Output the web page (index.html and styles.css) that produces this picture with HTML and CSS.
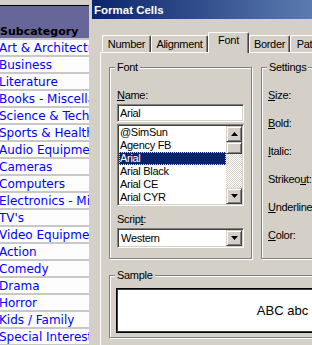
FILE: index.html
```html
<!DOCTYPE html>
<html>
<head>
<meta charset="utf-8">
<link rel="stylesheet" href="styles.css">
</head>
<body>
<div class="screen">
  <div class="subcat">
    <div class="subcat-top"></div>
    <div class="subcat-head">Subcategory</div>
    <ul class="subcat-list">
      <li>Art &amp; Architecture</li>
      <li>Business</li>
      <li>Literature</li>
      <li>Books - Miscellaneous</li>
      <li>Science &amp; Technology</li>
      <li>Sports &amp; Health</li>
      <li>Audio Equipment</li>
      <li>Cameras</li>
      <li>Computers</li>
      <li>Electronics - Misc</li>
      <li>TV's</li>
      <li>Video Equipment</li>
      <li>Action</li>
      <li>Comedy</li>
      <li>Drama</li>
      <li>Horror</li>
      <li>Kids / Family</li>
      <li>Special Interest</li>
    </ul>
  </div>
  <div class="dialog">
    <div class="titlebar">Format Cells</div>
    <div class="dialog-body">
      <div class="tabs">
        <div class="tab tab-number">Number</div>
        <div class="tab tab-align">Alignment</div>
        <div class="tab tab-font active">Font</div>
        <div class="tab tab-border">Border</div>
        <div class="tab tab-pat">Patterns</div>
      </div>
      <div class="tabpanel">
        <div class="top-groups">
          <div class="group font-group">
            <span class="legend">Font</span>
            <div class="label"><u>N</u>ame:</div>
            <div class="field">Arial</div>
            <div class="listbox">
              <div class="items">
                <div class="item">@SimSun</div>
                <div class="item">Agency FB</div>
                <div class="item sel">Arial</div>
                <div class="item">Arial Black</div>
                <div class="item">Arial CE</div>
                <div class="item">Arial CYR</div>
              </div>
              <div class="scroll">
                <div class="sbtn"><svg width="7" height="4" viewBox="0 0 7 4"><polygon points="3.5,0 7,4 0,4" fill="#000"/></svg></div>
                <div class="thumb"></div>
                <div class="track"></div>
                <div class="sbtn"><svg width="7" height="4" viewBox="0 0 7 4"><polygon points="0,0 7,0 3.5,4" fill="#000"/></svg></div>
              </div>
            </div>
            <div class="label script-label">Scrip<u>t</u>:</div>
            <div class="combo">
              <div class="combo-text">Western</div>
              <div class="sbtn"><svg width="7" height="4" viewBox="0 0 7 4"><polygon points="0,0 7,0 3.5,4" fill="#000"/></svg></div>
            </div>
          </div>
          <div class="group settings-group">
            <span class="legend">Settings</span>
            <div class="setting"><u>S</u>ize:</div>
            <div class="setting"><u>B</u>old:</div>
            <div class="setting"><u>I</u>talic:</div>
            <div class="setting">Strikeo<u>u</u>t:</div>
            <div class="setting"><u>U</u>nderline:</div>
            <div class="setting"><u>C</u>olor:</div>
          </div>
        </div>
        <div class="group sample-group">
          <span class="legend">Sample</span>
          <div class="sample">ABC abc</div>
        </div>
      </div>
    </div>
  </div>
</div>
</body>
</html>
```
FILE: styles.css
```css
html, body {
  margin: 0;
  padding: 0;
}
body {
  width: 312px;
  height: 345px;
  overflow: hidden;
  background: #d4d0c8;
}
.screen {
  display: flex;
  width: 312px;
  height: 345px;
  overflow: hidden;
}

/* left subcategory table */
.subcat {
  flex: 0 0 89px;
  width: 89px;
  background: #fdfdfd;
  font-family: "DejaVu Sans", Verdana, sans-serif;
  overflow: hidden;
}
.subcat-top {
  height: 5px;
  background: #d4d0c8;
  border-bottom: 1px solid #000;
}
.subcat-head {
  height: 32px;
  background: #666699;
  border-bottom: 2px solid #c8c8c8;
  display: flex;
  align-items: flex-end;
  font-weight: bold;
  font-size: 11px;
  line-height: 12px;
  color: #000;
  white-space: nowrap;
}
.subcat-list {
  list-style: none;
  margin: 0;
  padding: 0;
}
.subcat-list li {
  height: 15px;
  line-height: 17px;
  border-bottom: 2px solid #c8c8c8;
  overflow: hidden;
  white-space: nowrap;
  font-size: 12px;
  color: #0000ff;
  text-indent: -1px;
}

/* dialog */
.dialog {
  flex: 0 0 auto;
  width: 420px;
  padding-left: 3px;
  background: #d4d0c8;
  font-family: "Liberation Sans", Arial, sans-serif;
  font-size: 11px;
  letter-spacing: -0.3px;
  color: #000;
}
.titlebar {
  height: 19px;
  box-sizing: border-box;
  padding: 1px 0 0 2px;
  line-height: 18px;
  font-weight: bold;
  font-size: 11.5px;
  letter-spacing: 0;
  color: #fff;
  background: linear-gradient(to right, #0a246a, #a6caf0);
}
.dialog-body {
  padding-left: 8px;
}
.tabs {
  display: flex;
  align-items: flex-end;
  height: 20px;
  margin-top: 13px;
  padding-left: 2px;
}
.tab {
  box-sizing: border-box;
  height: 17px;
  border-top: 1px solid #fff;
  border-left: 1px solid #fff;
  border-right: 1px solid #404040;
  box-shadow: inset -1px 0 0 #808080;
  border-radius: 2px 2px 0 0;
  padding-top: 2px;
  line-height: 13px;
  text-align: center;
  white-space: nowrap;
  overflow: hidden;
  background: #d4d0c8;
}
.tab.active {
  height: 21px;
  margin-bottom: -1px;
  position: relative;
  z-index: 1;
  padding-top: 1px;
}
.tab-number { width: 49px; }
.tab-align { width: 57px; }
.tab-font { width: 41px; }
.tab-border { width: 41px; }
.tab-pat { width: 52px; }

.tabpanel {
  border-top: 1px solid #fff;
  border-left: 1px solid #fff;
  padding: 14px 0 0 8px;
  height: 330px;
}
.top-groups {
  display: flex;
  gap: 9px;
}
.group {
  position: relative;
  box-sizing: border-box;
  border: 1px solid #808080;
  box-shadow: inset 1px 1px 0 #fff, 1px 1px 0 #fff;
}
.legend {
  position: absolute;
  top: -7px;
  left: 5px;
  padding: 0 2px;
  background: #d4d0c8;
  line-height: 13px;
  white-space: nowrap;
}
.font-group {
  width: 143px;
  height: 192px;
  padding: 21px 0 0 7px;
}
.settings-group {
  width: 200px;
  height: 192px;
  padding: 13px 0 0 6px;
}
.sample-group {
  margin-top: 16px;
  width: 400px;
  height: 63px;
  padding: 12px 0 0 6px;
}
.label {
  line-height: 13px;
}
.sunken {
  border: 1px solid;
}
.field {
  box-sizing: border-box;
  width: 127px;
  height: 18px;
  margin-top: 2px;
  border: 1px solid;
  border-color: #808080 #fff #fff #808080;
  box-shadow: inset 1px 1px 0 #404040, inset -1px -1px 0 #d4d0c8;
  background: #fff;
  padding: 1px 2px 0;
  line-height: 14px;
}
.listbox {
  box-sizing: border-box;
  width: 127px;
  height: 82px;
  margin-top: 2px;
  border: 1px solid;
  border-color: #808080 #fff #fff #808080;
  box-shadow: inset 1px 1px 0 #404040, inset -1px -1px 0 #d4d0c8;
  background: #fff;
  padding: 1px;
  display: flex;
}
.items {
  flex: 1;
  overflow: hidden;
}
.item {
  height: 13px;
  line-height: 13px;
  padding-left: 1px;
  white-space: nowrap;
}
.item.sel {
  background: #0a246a;
  color: #fff;
  outline: 1px dotted #e8e890;
  outline-offset: -1px;
}
.scroll {
  width: 16px;
  display: flex;
  flex-direction: column;
}
.sbtn, .thumb {
  box-sizing: border-box;
  flex: 0 0 auto;
  width: 16px;
  height: 16px;
  border: 1px solid;
  border-color: #d4d0c8 #404040 #404040 #d4d0c8;
  box-shadow: inset 1px 1px 0 #fff, inset -1px -1px 0 #808080;
  background: #d4d0c8;
  display: flex;
  align-items: center;
  justify-content: center;
}
.sbtn svg {
  display: block;
}
.thumb {
  height: 12px;
}
.track {
  flex: 1;
  background: repeating-conic-gradient(#fff 0 25%, #d4d0c8 0 50%) 0 0 / 2px 2px;
}
.script-label {
  margin-top: 7px;
}
.combo {
  box-sizing: border-box;
  width: 127px;
  height: 20px;
  margin-top: 2px;
  border: 1px solid;
  border-color: #808080 #fff #fff #808080;
  box-shadow: inset 1px 1px 0 #404040, inset -1px -1px 0 #d4d0c8;
  background: #fff;
  padding: 1px;
  display: flex;
}
.combo-text {
  flex: 1;
  padding: 1px 0 0 2px;
  line-height: 15px;
}
.setting {
  line-height: 28px;
}
.sample {
  box-sizing: border-box;
  width: 333px;
  height: 45px;
  border: 1px solid #000;
  box-shadow: inset 1px 1px 0 #404040, inset -1px -1px 0 #404040;
  background: #fff;
  display: flex;
  align-items: center;
  justify-content: center;
  font-size: 13px;
  letter-spacing: 0;
}
```
